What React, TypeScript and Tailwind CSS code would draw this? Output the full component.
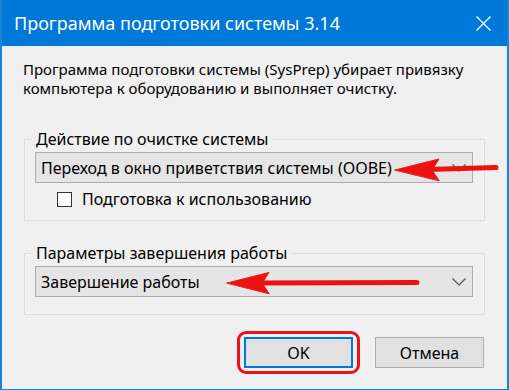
const font = { fontFamily: '"Segoe UI", "Noto Sans", sans-serif' };

function Combo({ text }: { text: string }) {
  return (
    <div className="flex h-[31px] w-[438px] items-center justify-between border border-[#adadad] bg-[#e5e5e5] pl-[5px] pr-[6px] text-[16px] text-black">
      <span>{text}</span>
      <svg width="14" height="8" viewBox="0 0 14 8" fill="none" stroke="#555555" strokeWidth="1.2">
        <polyline points="0.5,0.5 7,7 13.5,0.5" />
      </svg>
    </div>
  );
}

export default function App() {
  return (
    <div
      className="relative flex h-[390px] w-[509px] flex-col overflow-hidden border-x-2 border-b border-[#1883d7] bg-[#f0f0f0] text-black"
      style={font}
    >
      {/* Title bar */}
      <div className="flex h-[46px] shrink-0 items-center justify-between bg-[#0078d7] pl-[12px] pr-[16px] text-white">
        <span className="text-[18px]">Программа подготовки системы 3.14</span>
        <svg width="15" height="15" viewBox="0 0 15 15" stroke="white" strokeWidth="1.2">
          <line x1="0.5" y1="0.5" x2="14.5" y2="14.5" />
          <line x1="14.5" y1="0.5" x2="0.5" y2="14.5" />
        </svg>
      </div>

      {/* Body */}
      <div className="flex flex-1 flex-col px-[21px] pt-[14px]">
        <p className="text-[15px] leading-[19px]">
          Программа подготовки системы (SysPrep) убирает привязку
          <br />
          компьютера к оборудованию и выполняет очистку.
        </p>

        <fieldset className="mt-[31px] ml-[1px] w-[461px] border border-[#dcdcdc] px-[10px] pb-[12px] pt-[3px]">
          <legend className="-ml-[3px] px-[4px] text-[16px] leading-[20px]">Действие по очистке системы</legend>
          <Combo text="Переход в окно приветствия системы (OOBE)" />
          <label className="mt-[7px] ml-[22px] flex items-center gap-[10px] text-[16px] leading-[18px]">
            <span className="h-[15px] w-[15px] border border-[#333333] bg-white" />
            Подготовка к использованию
          </label>
        </fieldset>

        <fieldset className="mt-[22px] ml-[1px] w-[461px] border border-[#dcdcdc] px-[10px] pb-[17px] pt-[3px]">
          <legend className="-ml-[3px] px-[4px] text-[16px] leading-[20px]">Параметры завершения работы</legend>
          <Combo text="Завершение работы" />
        </fieldset>

        <div className="mt-[22px] flex justify-end gap-[22px] pr-[2px]">
          <div className="relative">
            <button className="h-[31px] w-[109px] border-2 border-[#0078d7] bg-[#e1e1e1] text-[16px]">OK</button>
            <div className="pointer-events-none absolute -inset-x-[7px] -inset-y-[6px] rounded-[9px] border-[3px] border-[#e8141c]" />
          </div>
          <button className="h-[31px] w-[109px] border border-[#adadad] bg-[#e1e1e1] text-[16px]">Отмена</button>
        </div>
      </div>

      {/* Red annotation arrows */}
      <svg className="pointer-events-none absolute left-0 top-0" width="509" height="390" viewBox="0 0 509 390">
        <g fill="#ee1111" stroke="#ee1111" strokeLinecap="round">
          <line x1="494" y1="167.5" x2="425" y2="169.5" strokeWidth="5" />
          <path d="M393 170 L437 159 L430 170 L437 180.5 Z" strokeWidth="1" strokeLinejoin="round" />
          <line x1="415" y1="282.5" x2="255" y2="283" strokeWidth="5" />
          <path d="M225 283 L267 272.5 L260 283 L267 293.5 Z" strokeWidth="1" strokeLinejoin="round" />
        </g>
      </svg>
    </div>
  );
}
